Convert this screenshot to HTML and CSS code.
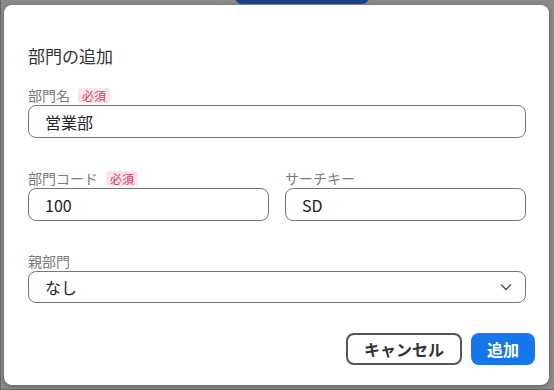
FILE: index.html
```html
<!DOCTYPE html>
<html lang="ja">
<head>
<meta charset="utf-8">
<title>部門の追加</title>
<link rel="stylesheet" href="styles.css">
</head>
<body>
<div class="backdrop">
	<div class="behind-tab"></div>
	<div class="dialog">
		<h2 class="dialog-title">部門の追加</h2>

		<div class="field">
			<label class="field-label">部門名 <span class="req">必須</span></label>
			<div class="input">営業部</div>
		</div>

		<div class="row">
			<div class="field">
				<label class="field-label">部門コード <span class="req">必須</span></label>
				<div class="input">100</div>
			</div>
			<div class="field">
				<label class="field-label">サーチキー</label>
				<div class="input">SD</div>
			</div>
		</div>

		<div class="field">
			<label class="field-label">親部門</label>
			<div class="input select">
				<span>なし</span>
				<svg class="chev" width="14" height="14" viewBox="0 0 14 14"><path d="M2.5 5 L7 9.5 L11.5 5" fill="none" stroke="#555" stroke-width="1.5" stroke-linecap="round" stroke-linejoin="round"/></svg>
			</div>
		</div>

		<div class="actions">
			<button class="btn btn-cancel">キャンセル</button>
			<button class="btn btn-ok">追加</button>
		</div>
	</div>
</div>
</body>
</html>
```
FILE: styles.css
```css
html,body{
	margin:0;
	height:100%;
}
body{
	background:#8a8a8a;
	font-family:"Noto Sans CJK JP","Noto Sans",sans-serif;
	color:#333;
}
.backdrop{
	position:relative;
	height:100%;
	box-sizing:border-box;
	padding:5px 5px 5px 4px;
	box-shadow:inset 1px 0 0 #666, inset 0 -1px 0 #666;
}
.behind-tab{
	position:absolute;
	left:235px;
	top:-10px;
	width:134px;
	height:14px;
	background:#1b4489;
	border-radius:10px;
}
.dialog{
	position:relative;
	background:#fff;
	border-radius:8px;
	height:380px;
	box-sizing:border-box;
	padding:39px 23px 0 24px;
	box-shadow:0 1px 4px rgba(0,0,0,.35);
}
.dialog-title{
	margin:0 0 17px;
	font-size:17px;
	font-weight:normal;
	line-height:24px;
	color:#333;
}
.field{
	margin-bottom:30px;
}
.field-label{
	display:flex;
	align-items:center;
	gap:8px;
	height:20px;
	font-size:14px;
	color:#7a7a7a;
}
.req{
	background:#fde3ea;
	color:#d5405e;
	font-size:12px;
	line-height:15px;
	padding:0 4px;
	border-radius:3px;
}
.input{
	height:33px;
	box-sizing:border-box;
	border:1px solid #777;
	border-radius:8px;
	padding:0 16px;
	display:flex;
	align-items:center;
	font-size:16px;
	color:#222;
}
.row{
	display:grid;
	grid-template-columns:1fr 1fr;
	gap:16px;
}
.select{
	justify-content:space-between;
	padding-right:12px;
	height:32px;
}
.actions{
	display:flex;
	justify-content:flex-end;
	gap:9px;
	margin:1px -9px 0 0;
}
.btn{
	height:32px;
	box-sizing:border-box;
	border-radius:8px;
	font-family:inherit;
	font-size:16px;
	font-weight:bold;
	padding:0 16px;
}
.btn-cancel{
	background:#fff;
	border:2px solid #555;
	color:#333;
}
.btn-ok{
	background:#1677ec;
	border:none;
	color:#fff;
}
```
